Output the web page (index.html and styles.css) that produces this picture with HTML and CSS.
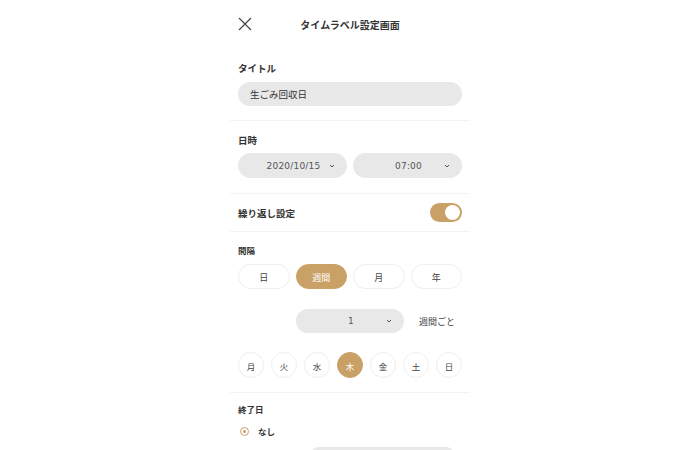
FILE: index.html
```html
<!DOCTYPE html>
<html lang="ja">
<head>
    <meta charset="UTF-8">
    <meta name="viewport" content="width=device-width, initial-scale=1.0">
    <title>タイムラベル設定画面</title>
    <link rel="stylesheet" href="styles.css">
</head>
<body>
    <div class="screen">
        <header class="header">
            <svg class="close" width="14" height="14" viewBox="0 0 14 14">
                <path d="M1 1 L13 13 M13 1 L1 13" stroke="#444" stroke-width="1.2" fill="none"/>
            </svg>
            <div class="header-title">タイムラベル設定画面</div>
            <div class="spacer"></div>
        </header>

        <section class="section sec-title">
            <div class="label">タイトル</div>
            <div class="field">生ごみ回収日</div>
        </section>

        <section class="section sec-date">
            <div class="label">日時</div>
            <div class="row">
                <div class="select">
                    <span class="select-text">2020/10/15</span>
                    <svg class="chev" width="6" height="4" viewBox="0 0 6 4"><path d="M1 1 L3 3 L5 1" stroke="#555" stroke-width="1" fill="none"/></svg>
                </div>
                <div class="select">
                    <span class="select-text">07:00</span>
                    <svg class="chev" width="6" height="4" viewBox="0 0 6 4"><path d="M1 1 L3 3 L5 1" stroke="#555" stroke-width="1" fill="none"/></svg>
                </div>
            </div>
        </section>

        <section class="section sec-repeat">
            <div class="label">繰り返し設定</div>
            <div class="toggle"><div class="knob"></div></div>
        </section>

        <section class="section sec-interval">
            <div class="label small">間隔</div>
            <div class="segments">
                <div class="seg">日</div>
                <div class="seg active">週間</div>
                <div class="seg">月</div>
                <div class="seg">年</div>
            </div>
            <div class="every">
                <div class="select every-select">
                    <span class="select-text">1</span>
                    <svg class="chev" width="6" height="4" viewBox="0 0 6 4"><path d="M1 1 L3 3 L5 1" stroke="#555" stroke-width="1" fill="none"/></svg>
                </div>
                <span class="every-text">週間ごと</span>
            </div>
            <div class="days">
                <div class="day">月</div>
                <div class="day">火</div>
                <div class="day">水</div>
                <div class="day active">木</div>
                <div class="day">金</div>
                <div class="day">土</div>
                <div class="day">日</div>
            </div>
        </section>

        <section class="section sec-end">
            <div class="label small">終了日</div>
            <div class="radio-row">
                <span class="radio"><span class="dot"></span></span>
                <span class="radio-text">なし</span>
            </div>
            <div class="end-bar"></div>
        </section>
    </div>
</body>
</html>
```

FILE: styles.css
```css
body {
    margin: 0;
    background-color: #fff;
    font-family: "Noto Sans CJK JP", "Noto Sans", sans-serif;
    color: #333;
}

.screen {
    width: 240px;
    height: 450px;
    margin: 0 auto;
    overflow: hidden;
}

.header {
    display: flex;
    align-items: center;
    height: 48px;
    padding: 0 8px;
}

.close {
    width: 14px;
    height: 14px;
}

.spacer {
    width: 14px;
}

.header-title {
    flex: 1;
    text-align: center;
    font-size: 10px;
    font-weight: 700;
    color: #333;
}

.section {
    padding: 0 8px;
    border-bottom: 1px solid #f3f3f3;
}

.label {
    font-size: 9.5px;
    font-weight: 700;
    line-height: 14px;
    color: #333;
}

.label.small {
    font-size: 8.5px;
    line-height: 12px;
}

.sec-title {
    padding-top: 13px;
    padding-bottom: 14px;
}

.field {
    margin-top: 7px;
    height: 24px;
    line-height: 24px;
    border-radius: 12px;
    background-color: #e8e8e8;
    padding: 0 12px;
    font-size: 9.5px;
    color: #333;
}

.sec-date {
    padding-top: 12px;
    padding-bottom: 15px;
}

.row {
    display: flex;
    gap: 6px;
    margin-top: 6px;
}

.select {
    flex: 1;
    display: flex;
    align-items: center;
    height: 25px;
    border-radius: 13px;
    background-color: #e8e8e8;
    padding: 0 12px 0 20px;
}

.select-text {
    flex: 1;
    text-align: center;
    font-family: "DejaVu Sans", sans-serif;
    font-size: 9px;
    color: #555;
    letter-spacing: 0.2px;
}

.chev {
    width: 6px;
    height: 4px;
}

.sec-repeat {
    display: flex;
    align-items: center;
    justify-content: space-between;
    height: 37px;
}

.toggle {
    position: relative;
    width: 32px;
    height: 19px;
    border-radius: 10px;
    background-color: #c9a166;
}

.knob {
    position: absolute;
    top: 2px;
    right: 2px;
    width: 15px;
    height: 15px;
    border-radius: 50%;
    background-color: #fff;
}

.sec-interval {
    padding-top: 12px;
    padding-bottom: 14px;
}

.segments {
    display: flex;
    gap: 6px;
    margin-top: 8px;
}

.seg {
    flex: 1;
    height: 25px;
    line-height: 25px;
    text-align: center;
    border: 1px solid #eee;
    box-sizing: border-box;
    border-radius: 13px;
    font-size: 9px;
    color: #444;
}

.seg.active,
.day.active {
    background-color: #c9a166;
    border-color: #c9a166;
    color: #fff;
}

.every {
    display: flex;
    align-items: center;
    margin-top: 20px;
    padding-left: 58px;
}

.every-select {
    flex: 0 0 108px;
    box-sizing: border-box;
    height: 24px;
}

.every-text {
    margin-left: 15px;
    font-size: 9px;
    color: #444;
}

.days {
    display: flex;
    justify-content: space-between;
    margin-top: 19px;
}

.day {
    width: 26px;
    height: 26px;
    line-height: 26px;
    box-sizing: border-box;
    text-align: center;
    border: 1px solid #eee;
    border-radius: 50%;
    font-size: 8.5px;
    color: #444;
}

.sec-end {
    padding-top: 10px;
    border-bottom: none;
}

.radio-row {
    display: flex;
    align-items: center;
    margin-top: 10px;
    padding-left: 2px;
}

.radio {
    display: flex;
    align-items: center;
    justify-content: center;
    width: 9px;
    height: 9px;
    box-sizing: border-box;
    border: 1px solid #c9a166;
    border-radius: 50%;
}

.dot {
    width: 3px;
    height: 3px;
    border-radius: 50%;
    background-color: #c9a166;
}

.radio-text {
    margin-left: 9px;
    font-size: 8.5px;
    font-weight: 700;
    color: #333;
}

.end-bar {
    margin: 10px 6px 0 71px;
    height: 20px;
    border-radius: 10px;
    background-color: #e8e8e8;
}
```
